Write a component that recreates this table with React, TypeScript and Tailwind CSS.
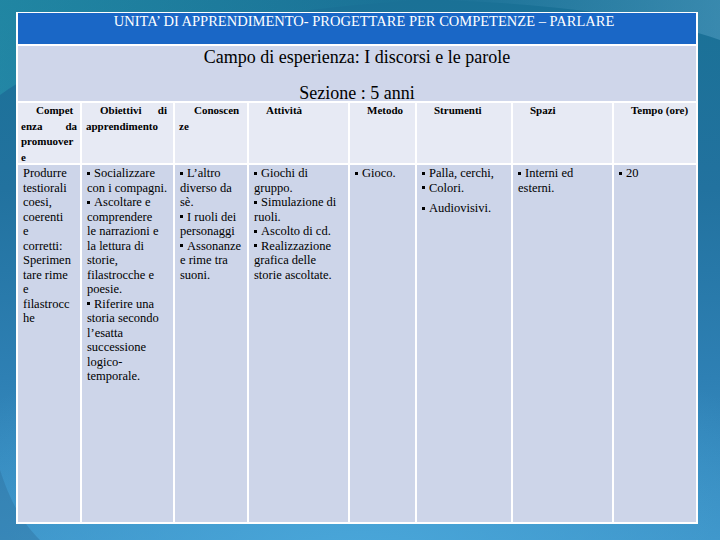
import React from "react";

const B = () => (
  <span className="inline-block w-[3px] h-[3px] bg-black align-middle mr-[4px] relative -top-[1px]" />
);

type Line = { t: string; b?: boolean; gap?: boolean };

const cols: Line[][] = [
  [
    { t: "Produrre" },
    { t: "testiorali" },
    { t: "coesi," },
    { t: "coerenti" },
    { t: "e" },
    { t: "corretti:" },
    { t: "Sperimen" },
    { t: "tare rime" },
    { t: "e" },
    { t: "filastrocc" },
    { t: "he" },
  ],
  [
    { t: "Socializzare", b: true },
    { t: "con i compagni." },
    { t: "Ascoltare e", b: true },
    { t: "comprendere" },
    { t: "le narrazioni e" },
    { t: "la lettura di" },
    { t: "storie," },
    { t: "filastrocche e" },
    { t: "poesie." },
    { t: "Riferire una", b: true },
    { t: "storia secondo" },
    { t: "l’esatta" },
    { t: "successione" },
    { t: "logico-" },
    { t: "temporale." },
  ],
  [
    { t: "L’altro", b: true },
    { t: "diverso da" },
    { t: "sè." },
    { t: "I ruoli dei", b: true },
    { t: "personaggi" },
    { t: "Assonanze", b: true },
    { t: "e rime tra" },
    { t: "suoni." },
  ],
  [
    { t: "Giochi di", b: true },
    { t: "gruppo." },
    { t: "Simulazione di", b: true },
    { t: "ruoli." },
    { t: "Ascolto di cd.", b: true },
    { t: "Realizzazione", b: true },
    { t: "grafica delle" },
    { t: "storie ascoltate." },
  ],
  [{ t: "Gioco.", b: true }],
  [
    { t: "Palla, cerchi,", b: true },
    { t: "Colori.", b: true },
    { t: "Audiovisivi.", b: true, gap: true },
  ],
  [{ t: "Interni ed", b: true }, { t: "esterni." }],
  [{ t: "20", b: true }],
];

const headerSingle = ["Attività", "Metodo", "Strumenti", "Spazi", "Tempo (ore)"];

export default function App() {
  return (
    <div className="relative w-[720px] h-[540px] overflow-hidden [font-family:'Liberation_Serif','Times_New_Roman',serif] bg-[radial-gradient(ellipse_70%_45%_at_50%_105%,#4aa7da_0%,rgba(74,167,218,0)_100%),linear-gradient(180deg,#1a7196_0%,#22729f_35%,#2e80b4_70%,#3c92c6_100%)]">
      <svg
        className="absolute inset-0"
        width="720"
        height="540"
        viewBox="0 0 720 540"
      >
        <defs>
          <linearGradient id="sw" x1="0" y1="0" x2="1" y2="0">
            <stop offset="0" stopColor="#2aa5b5" stopOpacity="0.8" />
            <stop offset="1" stopColor="#2aa5b5" stopOpacity="0" />
          </linearGradient>
          <linearGradient id="sw2" x1="0" y1="0" x2="1" y2="0">
            <stop offset="0" stopColor="#6fb4d8" stopOpacity="0" />
            <stop offset="1" stopColor="#6fb4d8" stopOpacity="0.6" />
          </linearGradient>
        </defs>
        <path d="M0 95 C 60 50, 200 15, 420 0 L0 0 Z" fill="url(#sw)" opacity="0.5" />
        <path d="M440 0 C 560 4, 660 18, 720 40 L720 0 Z" fill="url(#sw2)" opacity="0.6" />
        <path d="M0 540 L0 470 C 10 500, 20 520, 40 540 Z" fill="#2d6f9a" opacity="0.4" />
      </svg>

      <div className="relative ml-[16px] mt-[12px] w-[682px] bg-white p-[2px] pt-[1px] flex flex-col gap-[2px]">
        {/* Title */}
        <div className="h-[31px] bg-[#1a67c6] text-white text-[14.5px] leading-[17px] text-center pl-[14px]">
          UNITA’ DI APPRENDIMENTO- PROGETTARE PER COMPETENZE – PARLARE
        </div>

        {/* Campo */}
        <div className="h-[55px] bg-[#cfd6ea] text-black text-[18px] leading-[18px] text-center flex flex-col justify-between pt-[2px]">
          <div>Campo di esperienza: I discorsi e le parole</div>
          <div className="relative top-[1px]">Sezione : 5 anni</div>
        </div>

        {/* Header + data grid */}
        <div className="grid grid-cols-[62px_91px_72px_99px_65px_94px_99px_82px] gap-[2px] text-black">
          <div className="h-[60px] bg-[#e7eaf4] text-[11px] font-bold leading-[15.5px] px-[3px]">
            <div className="pl-[15px]">Compet</div>
            <div className="flex justify-between">
              <span>enza</span>
              <span>da</span>
            </div>
            <div>promuover</div>
            <div>e</div>
          </div>
          <div className="h-[60px] bg-[#e7eaf4] text-[11px] font-bold leading-[15.5px] pl-[4px] pr-[6px]">
            <div className="flex justify-between pl-[14px]">
              <span>Obiettivi</span>
              <span>di</span>
            </div>
            <div>apprendimento</div>
          </div>
          <div className="h-[60px] bg-[#e7eaf4] text-[11px] font-bold leading-[15.5px] px-[4px]">
            <div className="pl-[15px]">Conoscen</div>
            <div>ze</div>
          </div>
          {headerSingle.map((h) => (
            <div
              key={h}
              className="h-[60px] bg-[#e7eaf4] text-[11px] font-bold leading-[15.5px] pl-[17px] whitespace-nowrap"
            >
              {h}
            </div>
          ))}

          {cols.map((lines, i) => (
            <div
              key={i}
              className="h-[357px] bg-[#cdd5e9] text-[12.5px] leading-[14.5px] pl-[5px] pt-[1px] whitespace-nowrap"
            >
              {lines.map((l, j) => (
                <div key={j} className={l.gap ? "mt-[6px]" : ""}>
                  {l.b && <B />}
                  {l.t}
                </div>
              ))}
            </div>
          ))}
        </div>
      </div>
    </div>
  );
}
